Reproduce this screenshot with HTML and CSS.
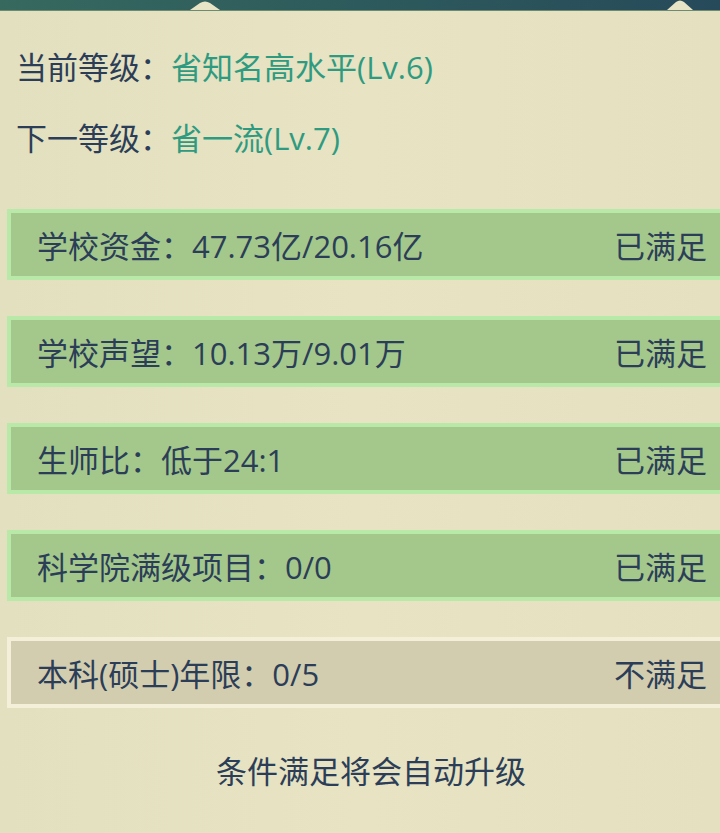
FILE: index.html
```html
<!DOCTYPE html>
<html lang="zh">
<head>
<meta charset="utf-8">
<link rel="stylesheet" href="styles.css">
</head>
<body>
<div class="panel">
  <div class="band">
    <svg class="notch notch-left" width="30" height="12" viewBox="0 0 30 12"><path d="M0 11 L10 4 Q15 1 20 4 L30 11 Z" fill="#e8e4c6"/></svg>
    <svg class="notch notch-right" width="26" height="12" viewBox="0 0 26 12"><path d="M0 11 L9 3 Q13 0 17 3 L26 11 Z" fill="#e8e4c6"/></svg>
  </div>
  <div class="levels">
    <div class="level-line"><span class="label">当前等级：</span><span class="value">省知名高水平(Lv.6)</span></div>
    <div class="level-line"><span class="label">下一等级：</span><span class="value">省一流(Lv.7)</span></div>
  </div>
  <div class="conditions">
    <div class="cond ok"><span class="cond-text">学校资金：47.73亿/20.16亿</span><span class="cond-state">已满足</span></div>
    <div class="cond ok"><span class="cond-text">学校声望：10.13万/9.01万</span><span class="cond-state">已满足</span></div>
    <div class="cond ok"><span class="cond-text">生师比：低于24:1</span><span class="cond-state">已满足</span></div>
    <div class="cond ok"><span class="cond-text">科学院满级项目：0/0</span><span class="cond-state">已满足</span></div>
    <div class="cond no"><span class="cond-text">本科(硕士)年限：0/5</span><span class="cond-state">不满足</span></div>
  </div>
  <div class="footer-note">条件满足将会自动升级</div>
</div>
</body>
</html>
```
FILE: styles.css
```css
html, body {
  margin: 0;
  padding: 0;
  background: #e5e1c1;
}
body {
  font-family: "Open Sans", "Noto Sans CJK SC", sans-serif;
  color: #2c3e57;
}
.panel {
  width: 720px;
  height: 833px;
  overflow: hidden;
  background: linear-gradient(90deg, #e3e0c0 0%, #e7e3c3 50%, #e4e0c0 100%);
}
.band {
  position: relative;
  height: 10px;
  background: linear-gradient(90deg, #37695f 0%, #2d5a5c 50%, #274a5a 100%);
  border-bottom: 1px solid #6b8c72;
}
.notch {
  position: absolute;
  bottom: -1px;
}
.notch-left { left: 190px; }
.notch-right { left: 667px; }
.levels {
  padding: 36px 0 0 16px;
  display: flex;
  flex-direction: column;
  gap: 31px;
}
.level-line {
  font-size: 31px;
  line-height: 40px;
  white-space: nowrap;
}
.value {
  color: #2e9b80;
}
.conditions {
  margin-top: 51px;
  display: flex;
  flex-direction: column;
  gap: 36px;
}
.cond {
  margin-left: 7px;
  margin-right: -8px;
  height: 63px;
  border: 4px solid #b8e9a8;
  background: #a4c88c;
  display: flex;
  align-items: center;
  justify-content: space-between;
  padding: 0 17px 0 26px;
  font-size: 31px;
  white-space: nowrap;
}
.cond.no {
  border-color: #f4efd9;
  background: #d3cdb0;
}
.footer-note {
  margin-top: 43px;
  text-align: center;
  font-size: 31px;
  line-height: 40px;
  padding-left: 22px;
}
```
